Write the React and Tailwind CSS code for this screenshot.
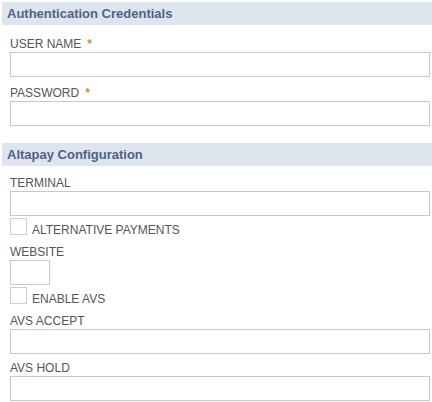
import React from 'react';

function SectionHeader({ title }) {
  return (
    <div className="ml-[2px] h-[23px] bg-[#dee5ef] pl-[5px] text-[13px] leading-[23px] font-bold text-[#4f6284]">
      {title}
    </div>
  );
}

function Label({ children, required }) {
  return (
    <div className="h-[13px] text-[12px] leading-[13px] text-[#555]">
      {children}
      {required && <span className="ml-[6px] font-bold text-[#c9961c]">*</span>}
    </div>
  );
}

function TextInput({ className = 'w-[420px]' }) {
  return <input type="text" className={`mt-[1px] block h-[25px] border border-[#c8c8c8] bg-white ${className}`} />;
}

function Checkbox({ label }) {
  return (
    <label className="flex h-[17px] items-end gap-[5px] text-[12px] leading-[13px] text-[#555]">
      <span className="block h-[17px] w-[17px] shrink-0 border border-[#cfcfcf] bg-white" />
      <span className="mb-[-2px]">{label}</span>
    </label>
  );
}

export default function App() {
  return (
    <div className="h-[402px] w-[432px] overflow-hidden bg-white pt-[2px] font-['Liberation_Sans',Arial,sans-serif]">
      <SectionHeader title="Authentication Credentials" />
      <div className="px-[10px]">
        <div className="mt-[13px]">
          <Label required>USER NAME</Label>
          <TextInput />
        </div>
        <div className="mt-[10px]">
          <Label required>PASSWORD</Label>
          <TextInput />
        </div>
      </div>
      <div className="mt-[17px]">
        <SectionHeader title="Altapay Configuration" />
      </div>
      <div className="px-[10px]">
        <div className="mt-[11px]">
          <Label>TERMINAL</Label>
          <TextInput />
        </div>
        <div className="mt-[2px]">
          <Checkbox label="ALTERNATIVE PAYMENTS" />
        </div>
        <div className="mt-[11px]">
          <Label>WEBSITE</Label>
          <TextInput className="w-[40px]" />
        </div>
        <div className="mt-[2px]">
          <Checkbox label="ENABLE AVS" />
        </div>
        <div className="mt-[11px]">
          <Label>AVS ACCEPT</Label>
          <TextInput />
        </div>
        <div className="mt-[8px]">
          <Label>AVS HOLD</Label>
          <TextInput />
        </div>
      </div>
    </div>
  );
}
